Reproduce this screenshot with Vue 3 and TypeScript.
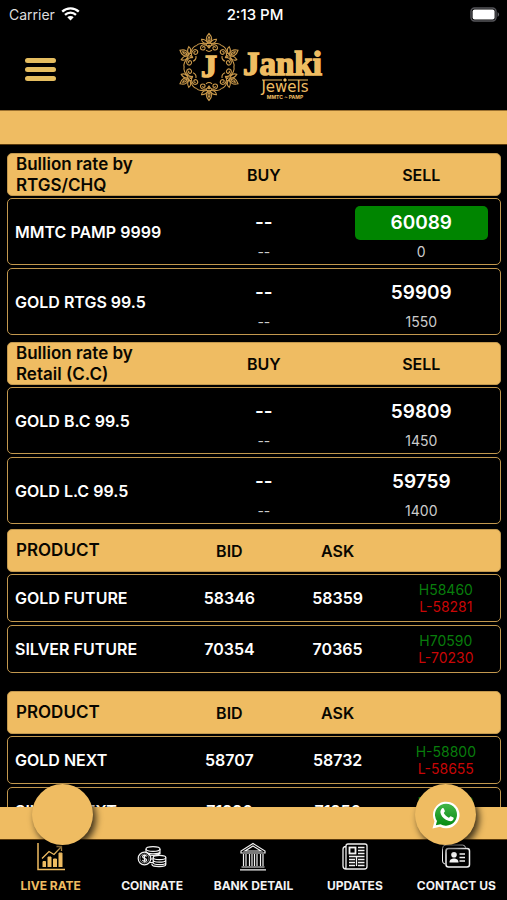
<script setup lang="ts">
interface BullionRow {
  name: string
  sell: string
  premium: string
  up?: boolean
}
interface BullionGroup {
  title: string
  rows: BullionRow[]
}
interface ProductRow {
  name: string
  bid: string
  ask: string
  high: string
  low: string
}

const bullion: BullionGroup[] = [
  {
    title: 'Bullion rate by RTGS/CHQ',
    rows: [
      { name: 'MMTC PAMP 9999', sell: '60089', premium: '0', up: true },
      { name: 'GOLD RTGS 99.5', sell: '59909', premium: '1550' },
    ],
  },
  {
    title: 'Bullion rate by Retail (C.C)',
    rows: [
      { name: 'GOLD B.C 99.5', sell: '59809', premium: '1450' },
      { name: 'GOLD L.C 99.5', sell: '59759', premium: '1400' },
    ],
  },
]

const products: ProductRow[][] = [
  [
    { name: 'GOLD FUTURE', bid: '58346', ask: '58359', high: 'H58460', low: 'L-58281' },
    { name: 'SILVER FUTURE', bid: '70354', ask: '70365', high: 'H70590', low: 'L-70230' },
  ],
  [
    { name: 'GOLD NEXT', bid: '58707', ask: '58732', high: 'H-58800', low: 'L-58655' },
    { name: 'SILVER NEXT', bid: '71226', ask: '71256', high: 'H-71450', low: 'L-71090' },
  ],
]

const petals = [0, 60, 120, 180, 240, 300]
</script>

<template>
  <div class="app">
    <div class="status">
      <div class="carrier">
        <span>Carrier</span>
        <svg width="19" height="14" viewBox="0 0 19 14" aria-hidden="true">
          <path d="M1.2 4.7a12 12 0 0 1 16.6 0M4 7.8a8 8 0 0 1 11 0" fill="none" stroke="#fff" stroke-width="2.3" />
          <path d="M9.5 13.6 6.3 10.3a4.6 4.6 0 0 1 6.4 0z" fill="#fff" />
        </svg>
      </div>
      <span class="clock">2:13 PM</span>
      <svg class="battery" width="31" height="15" viewBox="0 0 31 15" aria-hidden="true">
        <rect x="1" y="1" width="25" height="13" rx="3.5" fill="none" stroke="#55555a" stroke-width="1.4" />
        <rect x="2.6" y="2.6" width="22" height="10" rx="2" fill="#fff" />
        <path d="M27.6 5q3 2.5 0 5z" fill="#66666a" />
      </svg>
    </div>

    <header class="top">
      <button class="menu" type="button" aria-label="Menu">
        <span></span><span></span><span></span>
      </button>
      <svg class="logo" width="152" height="70" viewBox="0 0 152 70" role="img" aria-label="Janki Jewels">
        <g transform="translate(31 35)" fill="none" stroke="#c9984a" stroke-width="1.1">
          <g v-for="a in petals" :key="a" :transform="`rotate(${a})`">
            <path d="M0-33.5c3.6 3.8 3.6 7.4 0 10c-3.6-2.6-3.6-6.2 0-10zM0-30.500c1.300 2 1.300 3.800 0 5.200c-1.300-1.400-1.300-3.200 0-5.200z" />
            <path d="M1-23.500c1.200-3 3.500-4.200 6.500-4.200c-.4 3-2.500 4.600-6.500 4.200zM-1-23.500c-1.200-3-3.500-4.200-6.500-4.200c.4 3 2.500 4.600 6.500 4.200z" />
            <path d="M0-18.500c1-4.500 8.500-5 8.500-.8c0 3-4.800 3-4.600.2c.1-1.600 2.600-1.700 2.600-.1M0-18.500c-1-4.500-8.500-5-8.500-.8c0 3 4.800 3 4.600.2c-.1-1.600-2.600-1.700-2.600-.1" />
            <path d="M2-22.500c4-1.800 8.600-1.200 10.500 1M-2-22.500c-4-1.800-8.600-1.200-10.500 1M-3-16.800q3 2.500 6 0" />
            <circle cx="0" cy="-20.800" r="1" />
          </g>
        </g>
        <g fill="#efbd62">
          <g stroke="#efbd62" stroke-width="1.6">
            <text class="serif" x="31" y="45" font-size="32" text-anchor="middle">J</text>
            <text class="serif" x="65" y="43" font-size="33">Janki</text>
          </g>
          <path d="M84 47.500h20v1H84zM110 47.500h20v1h-20zM107 46l2 2-2 2-2-2z" />
          <text class="wide" x="107" y="60" font-size="15" text-anchor="middle">Jewels</text>
          <text class="tiny" x="107" y="67" font-size="5" text-anchor="middle">MMTC ~ PAMP</text>
        </g>
      </svg>
    </header>

    <div class="band"></div>

    <main class="rates">
      <table v-for="g in bullion" :key="g.title" class="bullion">
        <thead>
          <tr><th scope="col">{{ g.title }}</th><th scope="col">BUY</th><th scope="col">SELL</th></tr>
        </thead>
        <tbody>
          <tr v-for="r in g.rows" :key="r.name">
            <th scope="row">{{ r.name }}</th>
            <td><span class="price">--</span><span class="premium">--</span></td>
            <td><span class="price" :class="{ up: r.up }">{{ r.sell }}</span><span class="premium">{{ r.premium }}</span></td>
          </tr>
        </tbody>
      </table>

      <table v-for="(rows, i) in products" :key="i" class="product">
        <thead>
          <tr><th scope="col">PRODUCT</th><th scope="col">BID</th><th scope="col">ASK</th><td></td></tr>
        </thead>
        <tbody>
          <tr v-for="r in rows" :key="r.name">
            <th scope="row">{{ r.name }}</th>
            <td>{{ r.bid }}</td>
            <td>{{ r.ask }}</td>
            <td class="range"><span class="high">{{ r.high }}</span><span class="low">{{ r.low }}</span></td>
          </tr>
        </tbody>
      </table>
    </main>

    <div class="band lower">
      <button class="fab left" type="button" aria-label="Call"></button>
      <button class="fab right" type="button" aria-label="WhatsApp">
        <svg width="30" height="30" viewBox="0 0 30 30" aria-hidden="true">
          <defs>
            <linearGradient id="wa" x1="0" y1="0" x2="0" y2="1">
              <stop offset="0" stop-color="#43b649" /><stop offset="1" stop-color="#078a12" />
            </linearGradient>
          </defs>
          <path d="M1.500 28.500 3.500 21.200A13.300 13.300 0 1 1 9 26.700z" fill="#fff" />
          <path d="M4.800 25.300 6 21A11 11 0 1 1 9.500 24.200z" fill="url(#wa)" />
          <path d="M11.200 8.300c.6-.5 1.300-.3 1.600.3l1.100 2.500c.2.600-.9 1.500-1.100 2c1.200 2.400 2.700 3.700 5 4.600c.7-.3 1.300-1.700 1.900-1.500l2.700 1.400c.7.400.1 2-.6 2.700c-1.500 1.400-4 1-6.900-.6c-3-1.700-5.300-4.700-5.500-7.500c0-1.500.8-3 1.800-3.900z" fill="#fff" />
        </svg>
      </button>
    </div>

    <nav class="tabs">
      <a class="active" href="#live">
        <svg width="30" height="30" viewBox="0 0 30 30" fill="none" stroke="currentColor" aria-hidden="true">
          <path d="M2 1v26.500h27" stroke-width="1.500" />
          <path d="M7 25v-5.500h2.500V25M12 25V15h3v10M17.500 25v-8h3v8M23 25V11h3v14" fill="currentColor" stroke-width="1" />
          <path d="m6 16.500 7-7 5 3L25 5M20.500 4.500H25.500V9" stroke-width="1.300" />
        </svg>
        <span>LIVE RATE</span>
      </a>
      <a href="#coin">
        <svg width="30" height="30" viewBox="0 0 30 30" fill="none" stroke="currentColor" stroke-width="1.200" aria-hidden="true">
          <ellipse cx="16" cy="7" rx="7" ry="2.400" />
          <path d="M9 7v2.500c0 3 14 3 14 0V7M11 12.500c3 1.300 9 1.300 12-.8V9.500" />
          <circle cx="7.500" cy="16.500" r="6.300" /><circle cx="7.500" cy="16.500" r="4.500" stroke-width=".5" />
          <path d="M9.600 14.500c-1-1.600-4-1.300-4 .3c0 2 4 1.200 4 3.200c0 1.700-3.300 1.700-4.200 0M7.500 12.500v8" />
          <ellipse cx="22.500" cy="15.500" rx="6.300" ry="2.100" />
          <path d="M16.200 15.500V18c0 2.800 12.600 2.800 12.600 0v-2.500M16.200 18v2.500c0 2.800 12.600 2.800 12.600 0V18M15 21.500v1.300c1 2.500 13.800 2.500 13.800-.3v-2M12.500 20.500h3.500M13.500 17h3" />
        </svg>
        <span>COINRATE</span>
      </a>
      <a href="#bank">
        <svg width="30" height="30" viewBox="0 0 30 30" fill="none" stroke="currentColor" stroke-width="1.200" aria-hidden="true">
          <path d="M15 1.500 27 9v2H3V9zM15 4l8 5H7zM3.500 25h23M2 27.800h26" />
          <path d="M5.500 12v12M8 12v12M11.500 12v12M14 12v12M16.500 12v12M19 12v12M22.500 12v12M25 12v12" />
        </svg>
        <span>BANK DETAIL</span>
      </a>
      <a href="#updates">
        <svg width="30" height="30" viewBox="0 0 30 30" fill="none" stroke="currentColor" stroke-width="1.300" aria-hidden="true">
          <path d="M6 4.500q-3 0-3 3V24q0 3 3 3h18.500q2.500 0 2.500-2.500V4q0-2-2-2H8Q6 2 6 4v20.500q0 2.500-1 2.500" />
          <rect x="9.500" y="5.500" width="6" height="6" stroke-width="1.800" />
          <path d="M18 5.500h6.500M18 8.500h6.500M18 11.500h6.500M9 14.500h15.500M9 17.500h6M18 17.500h6.500M9 20.500h6M18 20.500h6.500M9 23.500h6M18 23.500h6.500M16.500 14.500v9.500" />
        </svg>
        <span>UPDATES</span>
      </a>
      <a href="#contact">
        <svg width="30" height="30" viewBox="0 0 30 30" fill="none" stroke="currentColor" stroke-width="1.500" aria-hidden="true">
          <path d="M4 22Q1.500 21.500 1.500 19V6.500Q1.500 3 5 3h16.500Q24 3 24.500 5.500" stroke-width="1" />
          <rect x="5" y="6.500" width="23.500" height="18.500" rx="2.500" />
          <circle cx="13" cy="12.800" r="2.800" fill="currentColor" stroke="none" />
          <path d="M8.500 20.500c0-3 2-3.500 3.500-4h2c1.500.5 3.500 1 3.500 4z" fill="currentColor" stroke="none" />
          <path d="M18.500 12H24M18.500 15.500H24M18.500 19H24" />
        </svg>
        <span>CONTACT US</span>
      </a>
    </nav>
  </div>
</template>

<style>
body {
  margin: 0;
  background: #000;
}
</style>

<style scoped>
.app {
  --gold: #efbc62;
  display: flex;
  flex-direction: column;
  height: 100vh;
  overflow: hidden;
  background: #000;
  color: #fff;
  font-family: Inter, Roboto, "Liberation Sans", sans-serif;
}
.status {
  display: grid;
  grid-template-columns: 1fr auto 1fr;
  align-items: center;
  height: 28px;
  padding: 0 6px 0 9px;
  font-size: 14px;
}
.carrier {
  display: flex;
  align-items: center;
  gap: 6px;
  color: #ddd;
}
.clock {
  font-size: 15px;
  font-weight: 500;
}
.battery {
  justify-self: end;
}
.top {
  display: grid;
  grid-template-columns: 1fr auto 1fr;
  align-items: center;
  height: 82px;
  padding: 0 25px;
}
.menu {
  display: flex;
  flex-direction: column;
  gap: 4px;
  width: 31px;
  padding: 0;
  border: 0;
  background: none;
}
.menu span {
  height: 5px;
  border-radius: 3px;
  background: #e5bd60;
}
.logo {
  display: block;
  margin-bottom: 4px;
}
.serif {
  font-family: "Liberation Serif", serif;
  font-weight: 700;
}
.wide {
  font-family: "DejaVu Sans", sans-serif;
}
.tiny {
  font-weight: 700;
}
.band {
  flex: none;
  height: 33px;
  border-top: 1px solid #9a7030;
  border-bottom: 1px solid #59390c;
  background: var(--gold);
}
.rates {
  flex: 1;
  min-height: 0;
  overflow: hidden;
  padding: 8px 6px 0 7px;
}
table,
thead {
  display: block;
}
tbody {
  display: grid;
  gap: 3px;
  padding-top: 2px;
}
tr {
  display: grid;
  align-items: center;
  box-sizing: border-box;
  border: 1px solid #c2984e;
  border-radius: 5px;
}
thead tr {
  height: 43px;
  background: var(--gold);
  color: #080600;
}
th,
td {
  padding: 0;
  text-align: center;
  font-size: 16px;
  font-weight: 600;
}
th:first-child {
  padding-left: 7px;
  text-align: left;
}
thead th:first-child {
  padding-left: 8px;
  font-size: 17px;
  line-height: 21px;
}
.bullion thead th:first-child {
  padding-right: 32px;
}
.bullion tr {
  grid-template-columns: 36% 32% 32%;
}
.product tr {
  grid-template-columns: 34% 22% 22% 22%;
}
.bullion tbody tr {
  height: 67px;
}
.bullion td {
  padding-top: 4px;
}
.product tbody tr {
  height: 48px;
}
.bullion + .bullion {
  margin-top: 7px;
}
.bullion + .product {
  margin-top: 5px;
}
.product + .product {
  margin-top: 18px;
}
.price,
.premium,
.range span {
  display: block;
}
.price {
  margin: 0 12px;
  border-radius: 5px;
  font-size: 19px;
  line-height: 34px;
}
.price.up {
  background: #008500;
}
.premium {
  margin-top: 2px;
  color: #ccc;
  font-size: 14px;
  font-weight: 400;
  line-height: 20px;
}
.range span {
  font-size: 14px;
  font-weight: 400;
  line-height: 17px;
}
.high {
  color: #087d0c;
}
.low {
  color: #c90606;
}
.lower {
  position: relative;
  height: 32px;
  border-top: 0;
}
.fab {
  position: absolute;
  top: -23px;
  display: flex;
  align-items: center;
  justify-content: center;
  width: 61px;
  height: 61px;
  padding: 0;
  border: 0;
  border-radius: 50%;
  background: var(--gold);
  box-shadow: 3px 4px 7px rgba(0, 0, 0, 0.75);
}
.left {
  left: 32px;
}
.right {
  right: 31px;
}
.tabs {
  display: grid;
  grid-template-columns: repeat(5, 1fr);
  height: 60px;
}
.tabs a {
  display: flex;
  flex-direction: column;
  align-items: center;
  gap: 6px;
  padding-top: 2px;
  color: #f2f2f2;
  font-size: 12px;
  font-weight: 700;
  line-height: 16px;
  text-decoration: none;
  white-space: nowrap;
}
.tabs a.active {
  color: var(--gold);
}
</style>
